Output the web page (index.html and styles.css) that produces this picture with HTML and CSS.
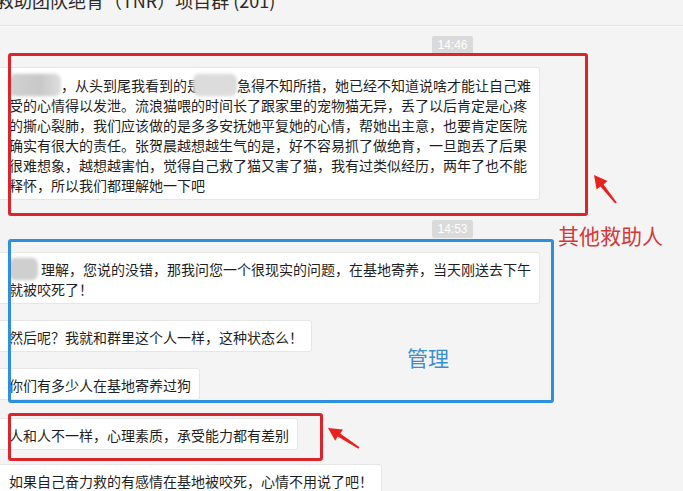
FILE: index.html
```html
<!DOCTYPE html>
<html lang="zh-CN">
<head>
  <meta charset="UTF-8" />
  <title>项目群</title>
  <meta name="viewport" content="width=device-width, initial-scale=1.0" />
  <link rel="stylesheet" href="styles.css">
</head>
<body>
  <div class="page">
    <header class="title-bar">
      <div class="title">流浪动物救助团队绝育（TNR）项目群 (201)</div>
    </header>

    <main class="chat">
      <div class="time first">14:46</div>
      <div class="bubble wide tall">
        <span class="blur name-a"></span>，从头到尾我看到的是<span class="blur name-b"></span>急得不知所措，她已经不知道说啥才能让自己难<br>
        受的心情得以发泄。流浪猫喂的时间长了跟家里的宠物猫无异，丢了以后肯定是心疼<br>
        的撕心裂肺，我们应该做的是多多安抚她平复她的心情，帮她出主意，也要肯定医院<br>
        确实有很大的责任。张贺晨越想越生气的是，好不容易抓了做绝育，一旦跑丢了后果<br>
        很难想象，越想越害怕，觉得自己救了猫又害了猫，我有过类似经历，两年了也不能<br>
        释怀，所以我们都理解她一下吧
      </div>

      <div class="time second">14:53</div>
      <div class="bubble wide after-time">
        <span class="blur name-c"></span>理解，您说的没错，那我问您一个很现实的问题，在基地寄养，当天刚送去下午<br>
        就被咬死了！
      </div>
      <div class="bubble">然后呢？我就和群里这个人一样，这种状态么！</div>
      <div class="bubble">你们有多少人在基地寄养过狗</div>
      <div class="bubble gap-lg">人和人不一样，心理素质，承受能力都有差别</div>
      <div class="bubble gap-sm">如果自己奋力救的有感情在基地被咬死，心情不用说了吧！</div>
    </main>

    <!-- annotations drawn over the chat -->
    <div class="mark red box-helpers"></div>
    <div class="mark blue box-admin"></div>
    <div class="mark red box-last"></div>

    <svg class="arrow arrow-top" width="34" height="36" viewBox="0 0 34 36">
      <polygon points="6,3 19.5,9 15.6,12.6 28.8,30.4 27.2,31.6 12.4,14.4 8.6,17.6" fill="#e8231f"/>
    </svg>
    <svg class="arrow arrow-bottom" width="38" height="28" viewBox="0 0 38 28">
      <polygon points="4,4 19,5.6 16.2,9.4 35.6,23.2 34.4,24.8 13.6,12.6 11.2,16.8" fill="#e8231f"/>
    </svg>

    <div class="note note-red">其他救助人</div>
    <div class="note note-blue">管理</div>
  </div>
</body>
</html>
```

FILE: styles.css
```css
html, body {
  margin: 0;
  height: 491px;
  overflow: hidden;
}
body {
  background: #f4f4f4;
  color: #1f1f1f;
  font-family: "Noto Sans CJK SC", "Liberation Sans", sans-serif;
}
.page {
  position: relative;
  height: 491px;
}

.title-bar {
  height: 25px;
  overflow: hidden;
  border-bottom: 1px solid #e0e0e0;
  box-shadow: 0 1px 0 #fbfbfb;
}
.title {
  margin: -12px 0 0 -76px;
  font-size: 18px;
  line-height: 24px;
  color: #2a2a2a;
  white-space: nowrap;
}

.chat {
  display: flex;
  flex-direction: column;
  align-items: flex-start;
}
.time {
  align-self: flex-start;
  margin-left: 432px;
  width: 41px;
  box-sizing: border-box;
  text-align: center;
  background: #dadada;
  color: #fff;
  font-family: "Liberation Sans", sans-serif;
  font-size: 12px;
  border-radius: 2px;
}
.time.first {
  margin-top: 10px;
  height: 19px;
  line-height: 19px;
}
.time.second {
  margin-top: 20px;
  height: 18px;
  line-height: 18px;
}

.bubble {
  box-sizing: border-box;
  background: #fff;
  border: 1px solid #e6e6e6;
  border-left: none;
  border-radius: 0 3px 3px 0;
  padding: 6px 8px 4px 9px;
  font-size: 14px;
  line-height: 20px;
  white-space: nowrap;
  margin-top: 16px;
}
.bubble.wide {
  width: 540px;
}
.bubble.tall {
  margin-top: 12px;
  padding: 7px 8px 4px 9px;
}
.bubble.after-time {
  margin-top: 14px;
}
.bubble.gap-lg { margin-top: 18px; }
.bubble.gap-sm { margin-top: 14px; }

.blur {
  display: inline-block;
  height: 20px;
  vertical-align: top;
  border-radius: 6px;
  filter: blur(1.5px);
  transform: scaleY(1.12);
}
.name-a {
  width: 52px;
  background: linear-gradient(90deg, #d2d2d2, #c8c8c8 60%, #dedede);
}
.name-b {
  width: 44px;
  margin-left: -8px;
  background: #dcdcdc;
}
.name-c {
  width: 29px;
  margin-right: 3px;
  background: #cfcfcf;
}

.mark {
  position: absolute;
  box-sizing: border-box;
  border: 3px solid;
  border-radius: 3px;
  pointer-events: none;
}
.mark.red { border-color: #d9252b; }
.mark.blue { border-color: #2e8fde; }
.box-helpers {
  left: 8px;
  top: 53px;
  width: 580px;
  height: 163px;
}
.box-admin {
  left: 8px;
  top: 239px;
  width: 546px;
  height: 164px;
}
.box-last {
  left: 8px;
  top: 413px;
  width: 315px;
  height: 48px;
}

.arrow {
  position: absolute;
}
.arrow-top {
  left: 588px;
  top: 172px;
}
.arrow-bottom {
  left: 324px;
  top: 424px;
}

.note {
  position: absolute;
  font-size: 21px;
  line-height: 22px;
  white-space: nowrap;
}
.note-red {
  left: 558px;
  top: 224px;
  color: #d6383a;
}
.note-blue {
  left: 407px;
  top: 346px;
  color: #3a8fd2;
}
```
